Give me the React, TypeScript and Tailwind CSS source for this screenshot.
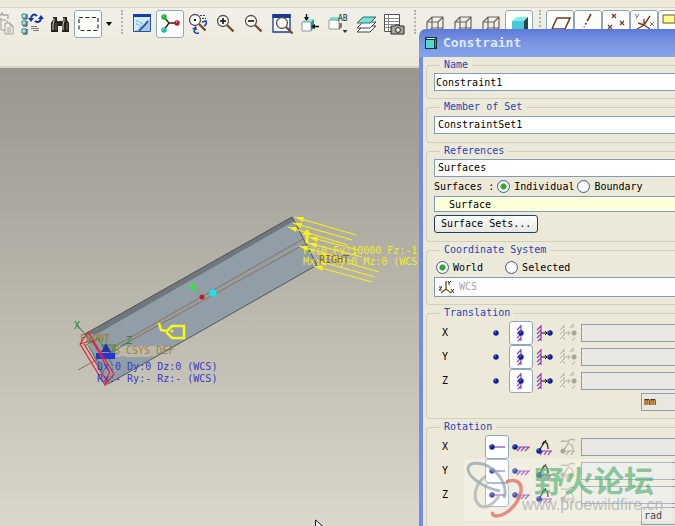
import type { ReactNode } from 'react'

const mono = 'font-[DejaVu_Sans_Mono,monospace]'

function Icon({ children }: { children: ReactNode }) {
  return (
    <svg viewBox="0 0 28 28" className="size-7 shrink-0" fill="none" aria-hidden="true">
      {children}
    </svg>
  )
}

function Tool({ label, on, children }: { label: string; on?: boolean; children: ReactNode }) {
  return (
    <button
      type="button"
      aria-label={label}
      className={
        on
          ? 'flex size-7 shrink-0 items-center justify-center rounded-[3px] border border-[#8fa9b8] bg-[#fdfdfb]'
          : 'flex size-7 shrink-0 items-center justify-center'
      }
    >
      <Icon>{children}</Icon>
    </button>
  )
}

function Separator() {
  return (
    <div className="flex h-7 w-[13px] shrink-0 justify-center">
      <div className="h-6 border-l-2 border-dotted border-[#b5b3a8]" />
    </div>
  )
}

const wireCube = (
  <path d="M6 12h11v11H6zM6 12l5-5h11v11l-5 5M17 12l5-5M11 7v11h11M6 23l5-5" stroke="#6b655c" strokeWidth="1.2" />
)

function Lens({ cx, cy, sign }: { cx: number; cy: number; sign?: 'plus' | 'minus' }) {
  return (
    <>
      <path d={`M${cx + 4} ${cy + 4}l6.5 6.5`} stroke="#7a4a2c" strokeWidth="2.4" />
      <circle cx={cx} cy={cy} r="5.5" fill="#fbfbf6" stroke="#55524c" strokeWidth="1.3" />
      {sign && <path d={`M${cx - 3} ${cy}h6`} stroke="#111" strokeWidth="1.6" />}
      {sign === 'plus' && <path d={`M${cx} ${cy - 3}v6`} stroke="#111" strokeWidth="1.6" />}
    </>
  )
}

function Toolbar() {
  return (
    <header className="shrink-0 border-b-2 border-[#d6d4c6] bg-[#edeade]">
      <div className="h-2 border-b border-[#d8d5c4] bg-[#ece9d8]" />
      <div className="flex h-[58px] items-start overflow-hidden bg-linear-to-b from-[#f1f0e8] to-[#ebe8d9] pt-0.5">
        <button type="button" aria-label="Paste" className="flex h-7 w-[18px] shrink-0 justify-start overflow-hidden">
          <Icon>
            <path d="M-3 7V5h4l1-2 1 2h5v4M-3 9h5" stroke="#aaa79b" strokeWidth="1.300" />
            <path d="M1 10h5l2 2v8H1z" stroke="#a29f94" fill="#f3f1e9" />
            <path d="M5 13h5l3 3v8H5zM10 13v3h3M7 18h4M7 20h4M7 22h4" stroke="#a29f94" fill="#f3f1e9" />
          </Icon>
        </button>
        <Tool label="Regenerate">
          {[4, 11, 19].map((y) => (
            <g key={y}>
              <path d={`M4 ${y}h4v4H4z`} fill="#a5eaea" stroke="#3b9094" />
              <path d={`M9 ${y}v5H5`} stroke="#234" />
            </g>
          ))}
          <path d="M13 9c0-4 3-6 6-3M23 8c0 4-4 5-6 3" stroke="#1a35a5" strokeWidth="2" />
          <path d="M10 8h6l-3 4zM20 9h6l-3-4z" fill="#1a35a5" />
          <path d="M13 16.500h6M13 18.500h8M15 20.500h6" stroke="#777" />
        </Tool>
        <Tool label="Find">
          <path d="M7 7h4v3l1 2v10H5v-9l2-3zM17 7h4v3l2 3v9h-7V12l1-2zM12 11h4v5h-4z" fill="#25231f" />
          <path d="M8 8v3l-1 3v6M18 8v3l-1 3v6" stroke="#d6d2c6" />
          <path d="M10 13v7M21 13v7" stroke="#77736a" />
        </Tool>
        <Tool label="Select box" on>
          <path d="M5 7.500h19v13H5z" stroke="#333" strokeWidth="1.200" strokeDasharray="4 2.500" />
        </Tool>
        <button type="button" aria-label="Select options" className="flex h-7 w-[13px] shrink-0 items-center justify-center">
          <svg viewBox="0 0 6 4" className="h-1 w-1.5" aria-hidden="true">
            <path d="M0 0h6L3 4z" fill="#000" />
          </svg>
        </button>
        <Separator />
        <Tool label="Repaint">
          <path d="M5.500 4.500h17v17h-17z" fill="#d4ecf8" stroke="#2752a5" />
          <path d="M5 4h18v3H5z" fill="#143f9e" />
          <path d="M7 21L20 10l2-1v12z" fill="#a4c8ec" />
          <path d="M20 11l-4 5-5 5" stroke="#234a86" strokeWidth="1.600" />
          <path d="M8 11c4 0 6 2 7 5M8 14c3 0 4 1 5 4" stroke="#3f83c8" strokeDasharray="1 1" />
        </Tool>
        <Tool label="Spin center" on>
          <path d="M8 7l5 6h8M13 13l-5 7" stroke="#222" strokeWidth="1.3" />
          <circle cx="8" cy="7" r="2.700" fill="#1fae2c" />
          <circle cx="21" cy="13" r="2.700" fill="#c9152a" />
          <circle cx="8" cy="20" r="2.700" fill="#22b5b5" />
          <path d="M7 6h1M20 12h1M7 19h1" stroke="#fff" />
        </Tool>
        <Tool label="Orient mode">
          <path d="M16 5.500h6M18 8.500h4" stroke="#2440aa" strokeDasharray="2 1" />
          <path d="M18 12l4-1c1 2 0 4-2 5M15 23c-4 1-6-1-4-4" stroke="#2440aa" strokeWidth="1.600" />
          <path d="M8 19l4-3 1 4z" fill="#2440aa" />
          <Lens cx={11} cy={10} />
          <path d="M10 10h2" stroke="#111" strokeWidth="2" />
        </Tool>
        <Tool label="Zoom in">
          <Lens cx={11} cy={11} sign="plus" />
        </Tool>
        <Tool label="Zoom out">
          <Lens cx={11} cy={11} sign="minus" />
        </Tool>
        <Tool label="Refit">
          <path d="M5 5h17v17H5z" fill="#fff" stroke="#16399a" strokeWidth="1.300" />
          <path d="M4.500 4h18v4h-18z" fill="#16399a" />
          <Lens cx={14} cy={13} />
        </Tool>
        <Tool label="Reorient">
          <path d="M6 12l3-3h9l-3 3z" fill="#8eeae4" />
          <path d="M6 12h9v9H6z" fill="#f7fbfa" stroke="#8a9a98" />
          <path d="M15 12l3-3v9l-3 3z" fill="#169c9c" />
          <path d="M10.500 4v6M23 16.500h-6" stroke="#111" strokeWidth="1.4" />
          <path d="M8 7h5l-2.500 4zM19 14v5l-4-2.500z" fill="#111" />
        </Tool>
        <Tool label="Saved views">
          <path d="M5 10l2-3h10l-2 3z" fill="#6fe0de" />
          <path d="M5 10h10v9H5z" fill="#fdfdfb" stroke="#999" />
          <path d="M15 13h3v4l-3 3z" fill="#777" />
          <text x="14" y="11" fontSize="8" fontFamily="DejaVu Sans Mono, monospace" fill="#222">AB</text>
          <path d="M18.500 20h5L21 23z" fill="#333" />
        </Tool>
        <Tool label="Layers">
          <path d="M11 16h13l-6 6H5z" fill="#fff" stroke="#444" />
          <path d="M11 12h13l-6 6H5z" fill="#fff" stroke="#444" />
          <path d="M11 7h13l-6 6H5z" fill="#74dfdc" stroke="#3a6d6c" />
        </Tool>
        <Tool label="View manager">
          <path d="M4.500 4.500h15v17h-15z" fill="#fff" stroke="#555" />
          <path d="M5 8.500h14M5 11.500h14M5 14.500h14M5 17.500h14M8.500 5v16" stroke="#888" />
          <path d="M11 16h4l1-1h3l1 1h4v8H11z" fill="#a9a698" stroke="#222" />
          <circle cx="18" cy="20" r="2.400" fill="#eee" stroke="#222" />
        </Tool>
        <Separator />
        <Tool label="Wireframe">{wireCube}</Tool>
        <Tool label="Hidden line">{wireCube}</Tool>
        <Tool label="No hidden">{wireCube}</Tool>
        <Tool label="Shading" on>
          <path d="M7 11l5-4h11l-4 4z" fill="#7ff0f0" />
          <path d="M7 11h12v11H7z" fill="#48c8d8" />
          <path d="M19 11l4-4v12l-4 3z" fill="#27474d" />
        </Tool>
        <Separator />
        <Tool label="Datum planes" on>
          <path d="M11 8h13l-5 11H6z" stroke="#6b3d1c" strokeWidth="1.500" />
        </Tool>
        <Tool label="Datum axes" on>
          <path d="M17 4l-7 13" stroke="#6b3d1c" strokeWidth="1.600" strokeDasharray="8 2 2 2" />
        </Tool>
        <Tool label="Datum points" on>
          <path d="M10 4l4 4M14 4l-4 4M18 11l4 4M22 11l-4 4M6 15l4 4M10 15l-4 4" stroke="#744420" strokeWidth="1.300" />
        </Tool>
        <Tool label="Coordinate systems" on>
          <path d="M14 9v6l-7 4M14 15l6 4M8 13l6 2M20 6l-6 9" stroke="#744420" strokeWidth="1.400" />
          <path d="M5 4l2 3M9 4l-3 5M20 12l4 4M24 12l-4 4" stroke="#777" />
        </Tool>
        <Tool label="Annotations" on>
          <path d="M5 5h12v8H5z" fill="#ffff8a" stroke="#6b5a20" />
        </Tool>
      </div>
    </header>
  )
}

// tail and tip of each force arrow
const forceArrows = [
  [295, 217, 356, 235],
  [293, 223, 352, 240],
  [288, 227, 348, 245],
  [309, 237, 358, 250],
  [308, 243, 362, 257],
  [299, 246, 352, 261],
  [318, 254, 379, 272],
  [318, 261, 375, 277],
  [314, 266, 372, 282],
]

function Scene() {
  return (
    <svg
      viewBox="0 68 419 458"
      className="block h-[458px] w-[419px]"
      fill="none"
      fontFamily="DejaVu Sans Mono, monospace"
      fontSize="10"
      role="img"
      aria-label="Beam model with load and constraint"
    >
      <path d="M85 334L292 217l25 48-164 93-48 28z" fill="#929ea7" />
      <path d="M85 334L292 217l2 4L97 334z" fill="#6f777d" />
      <path d="M85 334L292 217l25 48-209 119" stroke="#4f5558" />
      <path d="M110 349l193-110M78 370l227-126" stroke="#94704f" />
      <path d="M116 346h57l-20 11h-37z" fill="#bab7ac" />

      <g stroke="#f4f01c" strokeWidth="1.200">
        {forceArrows.map(([x1, y1, x2, y2]) => (
          <path key={y1} d={`M${x1} ${y1}L${x2} ${y2}`} />
        ))}
      </g>
      {forceArrows.map(([x, y]) => (
        <path key={y} d={`M${x} ${y}l9 0-1 5z`} fill="#f4f01c" />
      ))}
      <path d="M307 243v-9" stroke="#f4f01c" strokeWidth="3" />
      <path d="M302 235l5-6 5 6z" fill="#f4f01c" />
      <g fill="#f0ec28">
        <text x="303" y="254">Fx:0 Fy:10000 Fz:-1</text>
        <text x="303" y="265">Mx:0 My:0 Mz:0 (WCS</text>
      </g>
      <text x="319" y="263" fill="#80623f">RIGHT</text>

      <path d="M193 288l9 9" stroke="#35d23d" />
      <circle cx="193" cy="287" r="3" fill="#3ae33f" />
      <circle cx="202" cy="297" r="2.500" fill="#c41438" />
      <circle cx="213" cy="293" r="3.500" fill="#17e5ee" />
      <path d="M159 323l2 7 6 1M167 331l5-5h12v12h-12l-5-5z" stroke="#f8f51a" strokeWidth="2.500" />
      <circle cx="172" cy="331" r="1.500" fill="#f8f51a" />

      <text x="80" y="342" fill="#a5763c">FRONT</text>
      <text x="108" y="354" fill="#a8823f">CS_CSYS_DEF</text>
      <g stroke="#2e8a45">
        <path d="M77 325l28 32 22-14M88 345l16 28M98 338l14 26M86 345l12-7M102 345l14 0-6 8z" />
      </g>
      <text x="74" y="329" fill="#2c8744">X</text>
      <text x="126" y="344" fill="#2c8744">Z</text>
      <path d="M96 353h19v6H96z" fill="#2735d8" />
      <path d="M101 352l5-9 5 9z" fill="#26349a" />
      <path d="M80 344l8-12 26 42-9 11zM84 344l23 37M92 340l18 33M80 344l10-3M105 385l4-12" stroke="#e02440" strokeWidth="1.200" />
      <g fill="#3a39c8">
        <text x="97" y="370">Dx:0 Dy:0 Dz:0 (WCS)</text>
        <text x="97" y="382">Rx:- Ry:- Rz:- (WCS)</text>
      </g>
      <path d="M315.500 520v10l3-3 5 0z" fill="#fff" stroke="#111" />
    </svg>
  )
}

function Group({ title, className, children }: { title: string; className: string; children: ReactNode }) {
  return (
    <fieldset className={`min-w-0 rounded-l-[4px] border border-r-0 border-[#d0d0bf] pl-[7px] ${className}`}>
      <legend className="ml-1.5 h-3 px-1 leading-3 text-[#1c46b8]">{title}</legend>
      {children}
    </fieldset>
  )
}

function Radio({ name, label, on }: { name: string; label: string; on?: boolean }) {
  return (
    <label className="flex items-center gap-1">
      <input
        type="radio"
        name={name}
        defaultChecked={on}
        className="size-[13px] appearance-none rounded-full border border-[#3f6390] bg-radial from-white from-50% to-[#dcdccf] checked:bg-[radial-gradient(#2fa62f_0_2.500px,#f6f6f2_3.500px)]"
      />
      {label}
    </label>
  )
}

const dot = (x: number, y: number) => (
  <>
    <circle cx={x} cy={y} r="2.700" fill="#10209a" />
    <path d={`M${x - 1.5} ${y - 1}h1.500`} stroke="#8fa0f0" />
  </>
)

const wall = (x: number, color: string) => (
  <path d={`M${x} 4v16M${x} 5l-4 4M${x} 9l-4 4M${x} 13l-4 4M${x} 17l-3 3`} stroke={color} strokeWidth="1.200" />
)

const translation = [
  { label: 'Free', art: dot(11, 12) },
  { label: 'Fixed', art: <>{wall(12, '#9440b8')}{dot(12, 12)}</> },
  { label: 'Prescribed', art: <>{wall(8, '#9440b8')}<path d="M8 12h6M12 10l2 2-2 2" stroke="#111" />{dot(17, 12)}</> },
  {
    label: 'Function',
    art: (
      <>
        <path d="M7 4v16" stroke="#b9b6a8" strokeDasharray="3 1" />
        <path d="M7 5l-4 4M7 9l-4 4M7 14l-4 4M7 12h6M11 10l2 2-2 2M13 7l3-4M16 4v3M15 20l3-4" stroke="#b0ad9f" />
        <circle cx="17" cy="12" r="2.500" fill="#aaa79a" />
      </>
    ),
  },
]

const rotation = [
  { label: 'Free', art: <><path d="M8 12h12" stroke="#8c50c8" strokeWidth="1.300" />{dot(7, 12)}</> },
  {
    label: 'Fixed',
    art: <><path d="M8 12h13M12 12l-4 4M16 12l-4 4M20 12l-4 4" stroke="#9440b8" strokeWidth="1.200" />{dot(6, 12)}</>,
  },
  {
    label: 'Prescribed',
    art: (
      <>
        <path d="M6 16h13M10 16l-3 4M14 16l-3 4M18 16l-3 4" stroke="#9440b8" strokeWidth="1.200" />
        <path d="M7 14l6-9M10 7c4-1 5 3 5 7M9 9l4-3" stroke="#222" strokeWidth="1.200" />
        {dot(6, 16)}
      </>
    ),
  },
  {
    label: 'Function',
    art: (
      <>
        <path d="M7 15l5-8M4 7c2-3 4 1 7-1s3-2 7-1M12 9c3 0 4 3 4 6M9 16h9M12 16l-3 4M17 16l-3 4" stroke="#b0ad9f" strokeWidth="1.200" />
        <circle cx="6" cy="16" r="2.500" fill="#aaa79a" />
      </>
    ),
  },
]

function AxisRows({ title, modes, active, unit }: { title: string; modes: typeof translation; active: number; unit: string }) {
  return (
    <Group title={title} className="pt-0.5 pb-[7px]">
      {['X', 'Y', 'Z'].map((axis) => (
        <div key={axis} className="flex h-6 items-center">
          <span className="w-[51px] shrink-0 pl-2">{axis}</span>
          {modes.map((mode, i) => (
            <button
              key={mode.label}
              type="button"
              aria-label={`${title} ${axis} ${mode.label}`}
              aria-pressed={i === active}
              className={
                i === active
                  ? 'flex size-6 shrink-0 items-center justify-center rounded-[3px] border border-[#8fa9b8] bg-white'
                  : 'flex size-6 shrink-0 items-center justify-center'
              }
            >
              <svg viewBox="0 0 24 24" className="size-6 shrink-0" fill="none" aria-hidden="true">
                {mode.art}
              </svg>
            </button>
          ))}
          <input
            aria-label={`${title} ${axis} value`}
            disabled
            className="h-[18px] min-w-0 flex-1 border border-r-0 border-[#8c9db5] bg-[#e9e8e4]"
          />
        </div>
      ))}
      <select
        aria-label={`${title} unit`}
        className="ml-[207px] block h-[18px] w-full appearance-none border border-[#8c9db5] bg-[#e9e8e0] px-0.5"
      >
        <option>{unit}</option>
      </select>
    </Group>
  )
}

function Watermark() {
  return (
    <div className="pointer-events-none absolute top-[430px] left-[45px] flex h-[62px] w-[208px] bg-white/25">
      <svg viewBox="0 0 60 62" className="h-[62px] w-[60px] shrink-0" fill="none" aria-hidden="true">
        <path d="M36 32C20 29 4 18 4 10S18 3 27 9c10 7 17 20 13 30" stroke="#8fa3ab" strokeOpacity=".7" strokeWidth="3" />
        <path d="M22 17c-11 7-14 22-7 29 6 5 15-1 20-9" stroke="#a9adab" strokeOpacity=".7" strokeWidth="3" />
        <path d="M42 23c9-4 16 0 15 9-2 12-14 25-25 25-3 0-4-2-3-4" stroke="#dc6f62" strokeOpacity=".75" strokeWidth="3.500" />
      </svg>
      <div className="absolute top-1 left-[58px]">
        <p className="pl-3 font-[Noto_Sans_CJK_SC,sans-serif] text-[30px] leading-8 font-bold whitespace-nowrap text-[#4fae6c]/65">
          野火论坛
        </p>
        <p className="font-[Liberation_Sans,sans-serif] text-base leading-5 text-[#a9b0ae]/75">www.proewildfire.cn</p>
      </div>
    </div>
  )
}

function ConstraintDialog() {
  const field = 'block w-full border border-r-0 border-[#7f9db9]'
  return (
    <section
      aria-label="Constraint"
      className={`absolute top-[29px] right-0 bottom-0 left-[419px] flex flex-col overflow-hidden rounded-tl-[7px] bg-[#ece9d8] text-[10px] leading-3 text-black ${mono}`}
    >
      <div className="flex h-7 shrink-0 items-center gap-1.5 bg-linear-to-b from-[#5d78d8] via-[#7b96e1] to-[#83a5ea] pl-1.5">
        <svg viewBox="0 0 12 12" className="size-3" aria-hidden="true">
          <path d="M0 0h12v12H0z" fill="#12343a" />
          <path d="M1 3h8v8H1z" fill="#58d6cd" />
          <path d="M1 2l1-1h9L9 2z" fill="#c8f7f2" />
          <path d="M10 3l1-1v7l-1 2z" fill="#2a9797" />
        </svg>
        <h1 className="text-[13px] font-bold text-[#dfe8fb]">Constraint</h1>
      </div>
      <form className="flex flex-1 flex-col gap-0.5 border-l-4 border-[#758be6] pt-0.5 pl-[3px]">
        <Group title="Name" className="pt-0.5 pb-[7px]">
          <input aria-label="Name" defaultValue="Constraint1" className={`${field} h-[18px] bg-white pl-px`} />
        </Group>
        <Group title="Member of Set" className="pt-[3px] pb-2">
          <select aria-label="Member of Set" className={`${field} h-[18px] appearance-none bg-white pl-[3px]`}>
            <option>ConstraintSet1</option>
          </select>
        </Group>
        <Group title="References" className="pt-0.5 pb-2">
          <select aria-label="References" className={`${field} h-[18px] appearance-none bg-white pl-[3px]`}>
            <option>Surfaces</option>
          </select>
          <div className="flex h-[19px] items-center gap-[3px] whitespace-nowrap">
            <span>Surfaces :</span>
            <Radio name="surfaces" label="Individual" on />
            <Radio name="surfaces" label="Boundary" />
          </div>
          <input aria-label="Selected surface" readOnly value="Surface" className={`${field} h-4 bg-[#ffffd9] pl-3.5`} />
          <button
            type="button"
            className="mt-[3px] block h-[18px] w-[104px] rounded-[3px] border border-[#1d3f6b] bg-linear-to-b from-white to-[#e8e7df] pl-1.5 text-left leading-3"
          >
            Surface Sets...
          </button>
        </Group>
        <Group title="Coordinate System" className="pt-0.5 pb-[7px]">
          <div className="flex h-[19px] items-center gap-[22px] pl-0.5">
            <Radio name="csys" label="World" on />
            <Radio name="csys" label="Selected" />
          </div>
          <div className={`${field} flex h-5 items-center gap-1 bg-white pl-1`}>
            <svg viewBox="0 0 16 16" className="size-4" fill="none" aria-hidden="true">
              <path d="M7 2v8l-5 4M7 10l5 4" stroke="#8a5a2a" strokeWidth="1.500" />
              <path d="M0 8h3l-3 3h3M9 2l1 2 2-2M10 4v2M12 10l3 4M15 10l-3 4" stroke="#333" />
            </svg>
            <input aria-label="Coordinate system" disabled value="WCS" className="min-w-0 flex-1 text-[#aaa798]" />
          </div>
        </Group>
        <AxisRows title="Translation" modes={translation} active={1} unit="mm" />
        <AxisRows title="Rotation" modes={rotation} active={0} unit="rad" />
      </form>
      <Watermark />
    </section>
  )
}

export default function App() {
  return (
    <div className="relative flex h-screen flex-col overflow-hidden">
      <Toolbar />
      <main className="min-h-0 flex-1 overflow-hidden bg-linear-to-b from-[#99968e] to-[#dad7cb]">
        <Scene />
      </main>
      <ConstraintDialog />
    </div>
  )
}
